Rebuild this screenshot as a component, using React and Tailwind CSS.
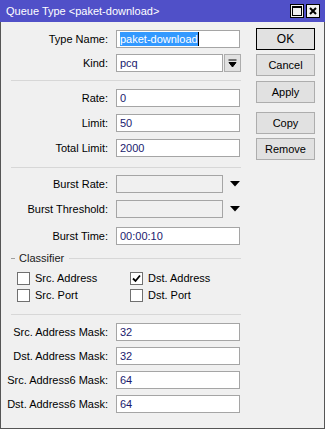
import React from "react";

const font = { fontFamily: '"Liberation Sans", Arial, sans-serif' };

function Field({ label, value, selected, disabled, narrow, children }) {
  return (
    <div className="flex items-center h-[18px]">
      <div className="w-[107px] text-right whitespace-nowrap">{label}</div>
      <div className={`ml-2 h-[18px] border border-[#a5a5a5] flex items-center pl-[3px] ${narrow ? "w-[107px]" : "w-[124px]"} ${disabled ? "bg-[#f0f0f0]" : "bg-white"}`}>
        {selected ? (
          <>
            <span className="bg-[#3399ff] text-white leading-[14px]">{value}</span>
            <span className="w-px h-[14px] bg-black" />
          </>
        ) : (
          <span className="text-[#1a1a6e] leading-[14px]">{value}</span>
        )}
      </div>
      {children}
    </div>
  );
}

function Sep({ className = "" }) {
  return <div className={`ml-[10px] w-[230px] h-px bg-[#d7d7d7] ${className}`} />;
}

function Tri() {
  return (
    <svg width="10" height="6" viewBox="0 0 10 6" className="ml-[7px]">
      <path d="M0 0 H10 L5 5.5 Z" fill="#000" />
    </svg>
  );
}

function Check({ label, checked }) {
  return (
    <div className="flex items-center h-[13px]">
      <div className="w-[13px] h-[13px] border border-[#707070] bg-white flex items-center justify-center">
        {checked && (
          <svg width="9" height="9" viewBox="0 0 9 9">
            <path d="M1 4.5 L3.5 7 L8 1.5" stroke="#000" strokeWidth="1.8" fill="none" />
          </svg>
        )}
      </div>
      <span className="ml-[5px]">{label}</span>
    </div>
  );
}

function Btn({ children, primary, className = "" }) {
  return (
    <div className={`w-[59px] h-[22px] flex items-center justify-center bg-[#e1e1e1] border ${primary ? "border-black" : "border-[#adadad]"} ${className}`}>
      {children}
    </div>
  );
}

export default function App() {
  return (
    <div className="w-[325px] h-[429px] bg-[#f0f0f0] text-[11px] text-black flex flex-col" style={font}>
      <div className="h-[22px] bg-[#5050c8] flex items-center pl-[6px] pr-[5px] shrink-0">
        <span className="text-white text-[11px] flex-1">Queue Type &lt;paket-download&gt;</span>
        <div className="w-[14px] h-[14px] bg-[#f0f0f0] border border-black flex items-center justify-center">
          <div className="w-[10px] h-[10px] border border-black border-t-2" />
        </div>
        <div className="ml-[2px] w-[14px] h-[14px] bg-[#f0f0f0] border border-black flex items-center justify-center">
          <svg width="8" height="8" viewBox="0 0 8 8">
            <path d="M1 1 L7 7 M7 1 L1 7" stroke="#000" strokeWidth="2" />
          </svg>
        </div>
      </div>
      <div className="flex-1 flex border-x border-b border-[#555]">
        <div className="w-[254px] flex flex-col pt-[8px]">
          <Field label="Type Name:" value="paket-download" selected />
          <div className="mt-[6px]">
            <Field label="Kind:" value="pcq" narrow>
              <div className="ml-px w-[17px] h-[18px] bg-[#e1e1e1] border border-[#adadad] flex items-center justify-center">
                <svg width="9" height="9" viewBox="0 0 9 9">
                  <path d="M0.5 1 H8.5 M1 3.5 H8 L4.5 8 Z" stroke="#000" strokeWidth="1" fill="#000" />
                </svg>
              </div>
            </Field>
          </div>
          <Sep className="mt-[8px]" />
          <div className="mt-[8px] flex flex-col gap-[7px]">
            <Field label="Rate:" value="0" />
            <Field label="Limit:" value="50" />
            <Field label="Total Limit:" value="2000" />
          </div>
          <Sep className="mt-[10px]" />
          <div className="mt-[7px] flex flex-col">
            <Field label="Burst Rate:" value="" disabled narrow>
              <Tri />
            </Field>
            <div className="mt-[7px]">
              <Field label="Burst Threshold:" value="" disabled narrow>
                <Tri />
              </Field>
            </div>
            <div className="mt-[9px]">
              <Field label="Burst Time:" value="00:00:10" />
            </div>
          </div>
          <div className="mt-[6px] flex items-center h-[14px]">
            <div className="ml-[10px] w-[4px] h-px bg-[#a0a0a0]" />
            <span className="ml-[4px] text-[#1a1a1a]">Classifier</span>
            <div className="ml-[5px] flex-1 mr-[14px] h-px bg-[#d7d7d7]" />
          </div>
          <div className="mt-[7px] grid grid-cols-[113px_1fr] gap-y-[4px] pl-[16px]">
            <Check label="Src. Address" />
            <Check label="Dst. Address" checked />
            <Check label="Src. Port" />
            <Check label="Dst. Port" />
          </div>
          <Sep className="mt-[12px]" />
          <div className="mt-[8px] flex flex-col gap-[6px]">
            <Field label="Src. Address Mask:" value="32" />
            <Field label="Dst. Address Mask:" value="32" />
            <Field label="Src. Address6 Mask:" value="64" />
            <Field label="Dst. Address6 Mask:" value="64" />
          </div>
        </div>
        <div className="flex flex-col pt-[6px] ml-[1px]">
          <Btn primary className="text-[12px]">OK</Btn>
          <Btn className="mt-[4px] h-[20px]">Cancel</Btn>
          <Btn className="mt-[5px]">Apply</Btn>
          <Btn className="mt-[9px]">Copy</Btn>
          <Btn className="mt-[4px]">Remove</Btn>
        </div>
      </div>
    </div>
  );
}
